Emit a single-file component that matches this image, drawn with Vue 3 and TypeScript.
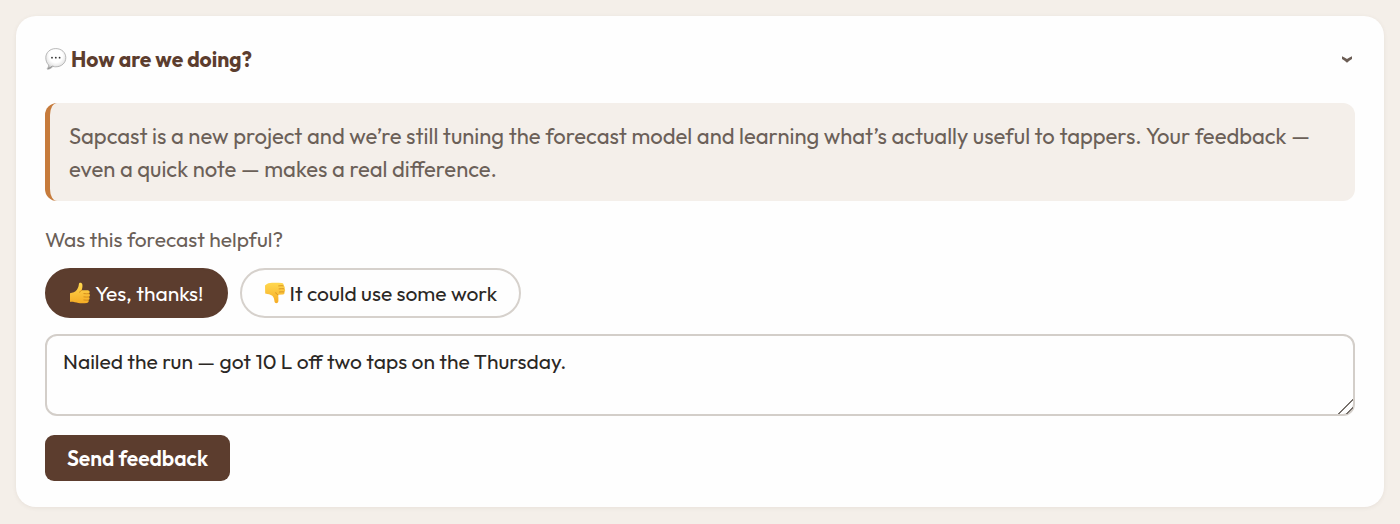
<script setup lang="ts">
import { ref } from 'vue'

type Answer = 'yes' | 'no'

const open = ref(true)
const answer = ref<Answer>('yes')
const note = ref('Nailed the run — got 10 L off two taps on the Thursday.')
</script>

<template>
  <main class="page">
    <section class="card">
      <h2 class="heading">
        <button class="toggle" type="button" :aria-expanded="open" @click="open = !open">
          <svg class="emoji" viewBox="0 0 22 22" aria-hidden="true">
            <defs>
              <radialGradient id="bubble" cx="50%" cy="35%" r="65%">
                <stop offset="0.5" stop-color="#ffffff" />
                <stop offset="0.8" stop-color="#e6e6e6" />
                <stop offset="1" stop-color="#b4b4b4" />
              </radialGradient>
            </defs>
            <path
              d="M10.800.6C16.600.6 20.800 4.500 20.800 9.700s-4.200 9.100-10 9.100c-1 0-2-.1-2.900-.4-1.300 1.500-3.200 2.700-5.300 2.800-.5 0-.6-.4-.3-.7.900-.9 1.400-2.200 1.300-3.500C1.900 15.300.8 12.700.8 9.700.8 4.500 5 .6 10.800.6Z"
              fill="url(#bubble)" stroke="#b0b0b0" stroke-width="0.9"
            />
            <path d="M3 20.400c1.900-.3 3.500-1.300 4.600-2.700" fill="none" stroke="#8c8c8c" stroke-width="1" />
            <g fill="#333333">
              <circle cx="7" cy="9.700" r="0.9" />
              <circle cx="10.800" cy="9.700" r="0.9" />
              <circle cx="14.600" cy="9.700" r="0.9" />
            </g>
          </svg>
          <span>How are we doing?</span>
          <svg class="chevron" viewBox="0 0 12 8" aria-hidden="true">
            <path d="M1 1.200Q3.500 2.300 6 4 8.500 2.300 11 1.200V4Q8.200 5.600 6 7.800 3.800 5.600 1 4Z" fill="#6b5d54" />
          </svg>
        </button>
      </h2>

      <form v-if="open" class="form" @submit.prevent>
        <p class="intro">
          Sapcast is a new project and we’re still tuning the forecast model and learning what’s
          actually useful to tappers. Your feedback — even a quick note — makes a real difference.
        </p>

        <p id="question" class="question">Was this forecast helpful?</p>
        <div class="answers" role="group" aria-labelledby="question">
          <button
            class="pill" :class="{ chosen: answer === 'yes' }" type="button"
            :aria-pressed="answer === 'yes'" @click="answer = 'yes'"
          >
            <svg class="emoji" viewBox="0 0 22 22" aria-hidden="true">
              <defs>
                <linearGradient id="thumb" x1="0" y1="0" x2="0" y2="1">
                  <stop offset="0" stop-color="#ffd84f" />
                  <stop offset="1" stop-color="#f5ac25" />
                </linearGradient>
              </defs>
              <path
                d="M1 11.200C3.600 10.700 6.300 10.100 7.900 7.800 9.200 6 9.700 4 9.900 2.100 10.100.2 13 .4 13.400 2.700c.3 2-.3 3.900-.7 5.500l6.100.1c2.100.1 2.500 2.700.9 3.300 1.700.6 1.600 2.900.1 3.300 1.300.8 1 2.700-.4 3.100.8 1.100.1 2.700-1.400 2.900-2.800.5-6.100.6-8.600.2C6.300 20.500 4.500 19.700 1 19.900Z"
                fill="url(#thumb)"
              />
              <path
                d="M20 11.700c-1.700.2-3.500.1-5.100-.1M19.900 15c-1.700.2-3.400.1-5-.1M19.300 18.100c-1.500.2-3 .1-4.400-.1M12.700 8.300c-1 .3-1.700 1-2 1.900"
                fill="none" stroke="#cb8115" stroke-width="0.8" stroke-linecap="round"
              />
            </svg>
            <span>Yes, thanks!</span>
          </button>
          <button
            class="pill" :class="{ chosen: answer === 'no' }" type="button"
            :aria-pressed="answer === 'no'" @click="answer = 'no'"
          >
            <svg class="emoji" viewBox="0 0 22 22" aria-hidden="true">
              <path
                d="M1 3.400C3 1.500 5.500.8 8 .8c3.300-.2 6.600-.1 9.800.1 1.600.2 2.300 1.600 1.700 2.800 1.300.4 1.700 2 .8 3 1.200.6 1.200 2.600-.1 3.200.7 1.100.1 2.500-1.400 2.600l-4.700.2c.2 2 .5 4.200.3 6.300-.3 2.800-3.500 3-3.900.6-.3-2.400-.7-4.300-2.200-5.800C6.500 12.300 3.800 12.100 1.200 11.500Z"
                fill="url(#thumb)"
              />
              <path
                d="M19.300 3.800c-1.700-.2-3-.1-4.600.1M20.100 6.800c-1.700-.2-3.400-.1-5 .1M20 9.900c-1.500-.2-3.100-.1-4.500.1M14 12.800c-1-.3-1.900-1-2.200-2.100"
                fill="none" stroke="#d08a1a" stroke-width="0.8" stroke-linecap="round"
              />
            </svg>
            <span>It could use some work</span>
          </button>
        </div>

        <textarea v-model="note" class="note" rows="2" aria-label="Your feedback"></textarea>

        <button class="send" type="submit">Send feedback</button>
      </form>
    </section>
  </main>
</template>

<style>
body {
  margin: 0;
  background: #f4efe9;
}
</style>

<style scoped>
.page {
  padding: 16px;
  font-family: Outfit, Lato, "Liberation Sans", sans-serif;
  font-size: 21px;
  font-weight: 450;
  line-height: 28px;
  color: #2b2825;
}

.card {
  padding: 28px 29px 26px;
  border-radius: 20px;
  background: #fefefe;
  box-shadow: 0 1px 4px rgba(92, 61, 46, 0.08);
}

.heading {
  margin: 0 0 29px;
  font-size: 21px;
  font-weight: 700;
  line-height: 30px;
}

.toggle {
  display: flex;
  align-items: center;
  gap: 4px;
  width: 100%;
  padding: 0;
  border: 0;
  background: none;
  color: #5c3d2e;
  font: inherit;
  cursor: pointer;
}

.emoji {
  flex: none;
  width: 22px;
  height: 22px;
}

.chevron {
  width: 12px;
  height: 8px;
  margin: 0 2px 0 auto;
}

.form {
  display: flex;
  flex-direction: column;
  align-items: flex-start;
}

.intro {
  box-sizing: border-box;
  width: 100%;
  margin: 0 0 24px;
  padding: 17px 20px 15px 19px;
  border-left: 5px solid #c67b3c;
  border-radius: 12px;
  background: #f4efea;
  color: #6b6058;
  font-size: 22px;
  line-height: 33px;
}

.question {
  margin: 0 0 15px;
  color: #6b6058;
}

.answers {
  display: flex;
  flex-wrap: wrap;
  gap: 12px;
  margin-bottom: 16px;
}

.pill {
  display: flex;
  align-items: center;
  gap: 4px;
  padding: 9px 22px;
  border: 2px solid #d6d1cc;
  border-radius: 25px;
  background: #fefefe;
  color: inherit;
  font: inherit;
  cursor: pointer;
}

.pill.chosen {
  border-color: #5c3d2e;
  background: #5c3d2e;
  color: #ffffff;
}

.note {
  box-sizing: border-box;
  width: 100%;
  height: 82px;
  margin: 0 0 19px;
  padding: 11px 16px;
  border: 2px solid #d3cec9;
  border-radius: 12px;
  background: #fefefe;
  color: inherit;
  font: inherit;
  resize: vertical;
}

.note::-webkit-resizer {
  background: linear-gradient(
    135deg,
    transparent 48%,
    #77716c 49%,
    #77716c 55%,
    transparent 56%,
    transparent 74%,
    #77716c 75%,
    #77716c 81%,
    transparent 82%
  );
}

.send {
  padding: 9px 22px;
  border: 0;
  border-radius: 9px;
  background: #5c3d2e;
  color: #ffffff;
  font: inherit;
  font-weight: 600;
  cursor: pointer;
}
</style>
